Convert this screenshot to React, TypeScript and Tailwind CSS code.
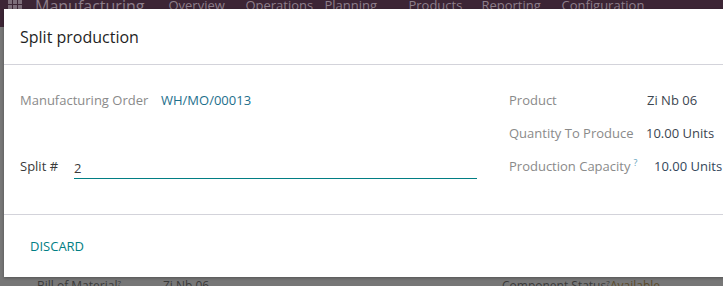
import React from "react";

const navItems = [
  { n: "Overview", w: "w-[77px]" },
  { n: "Operations", w: "w-[79px]" },
  { n: "Planning", w: "w-[84px]" },
  { n: "Products", w: "w-[73px]" },
  { n: "Reporting", w: "w-[80px]" },
  { n: "Configuration", w: "w-[90px]" },
];

function Row({ label, value, help, labelWidth, valueClass }: { label: string; value: string; help?: boolean; labelWidth: string; valueClass?: string }) {
  return (
    <div className="flex h-[33px] items-center">
      <div className={`${labelWidth} shrink-0 text-[#8a8a8a]`}>
        {label}
        {help && <sup className="ml-[3px] text-[9px] text-[#5fa3bd]">?</sup>}
      </div>
      <div className={valueClass ?? "text-[#3c4650]"}>{value}</div>
    </div>
  );
}

export default function App() {
  return (
    <div className="relative w-[723px] h-[286px] overflow-hidden bg-[#777777] font-['Open_Sans','Liberation_Sans',sans-serif]">
      {/* backdrop: navbar */}
      <div className="flex h-[27px] items-start whitespace-nowrap bg-[#3c2535] text-[#8e7f8b]">
        <div className="ml-[8px] mt-[-5px] grid grid-cols-3 gap-[1px]">
          {Array.from({ length: 9 }).map((_, i) => (
            <span key={i} className="block h-[4px] w-[4px] bg-[#7d6e7a]" />
          ))}
        </div>
        <span className="ml-[13px] mt-[-5px] text-[16px] leading-[22px]">Manufacturing</span>
        <div className="ml-[24px] mt-[-4px] flex text-[13px] leading-[18px]">
          {navItems.map((it) => (
            <span key={it.n} className={`${it.w} shrink-0`}>
              {it.n}
            </span>
          ))}
        </div>
      </div>
      {/* backdrop: form behind */}
      <div className="absolute left-0 top-[277px] flex w-full whitespace-nowrap text-[12px] text-[#3a3a3a]">
        <span className="ml-[37px] w-[126px] shrink-0">
          Bill of Material<sup className="text-[8px]">?</sup>
        </span>
        <span className="w-[339px] shrink-0">Zi Nb 06</span>
        <span className="w-[108px] shrink-0">
          Component Status<sup className="text-[8px]">?</sup>
        </span>
        <span className="text-[#5a4a2a]">Available</span>
      </div>

      {/* modal */}
      <div className="absolute left-[4px] top-[9px] h-[268px] w-[760px] bg-white shadow-[0_1px_3px_rgba(0,0,0,0.3)] text-[13px]">
        <div className="flex h-[56px] items-center border-b border-[#d3d3da] px-[16px]">
          <h2 className="mt-[1px] text-[16px] leading-[20px] text-[#1f1f1f]">Split production</h2>
        </div>
        <div className="flex h-[150px] border-b border-[#d3d3da] pt-[19px]">
          <div className="ml-[16px] w-[457px]">
            <Row label="Manufacturing Order" value="WH/MO/00013" labelWidth="w-[141px]" valueClass="text-[#1d6f8c]" />
            <div className="h-[33px]" />
            <div className="flex h-[33px] items-center">
              <div className="w-[54px] shrink-0 text-[#3a3a3a]">Split #</div>
              <div className="flex h-[24px] flex-1 items-center border-b border-b-[#017e84] pt-[6px] text-[#3a3a3a]">2</div>
            </div>
          </div>
          <div className="ml-[32px]">
            <Row label="Product" value="Zi Nb 06" labelWidth="w-[138px]" />
            <Row label="Quantity To Produce" value="10.00 Units" labelWidth="w-[137px]" />
            <Row label="Production Capacity" value="10.00 Units" help labelWidth="w-[145px]" valueClass="text-[#33475b]" />
          </div>
        </div>
        <div className="flex h-[62px] items-center px-[26px]">
          <button className="mt-[2px] text-[13px] uppercase text-[#017e84]">Discard</button>
        </div>
      </div>
    </div>
  );
}
